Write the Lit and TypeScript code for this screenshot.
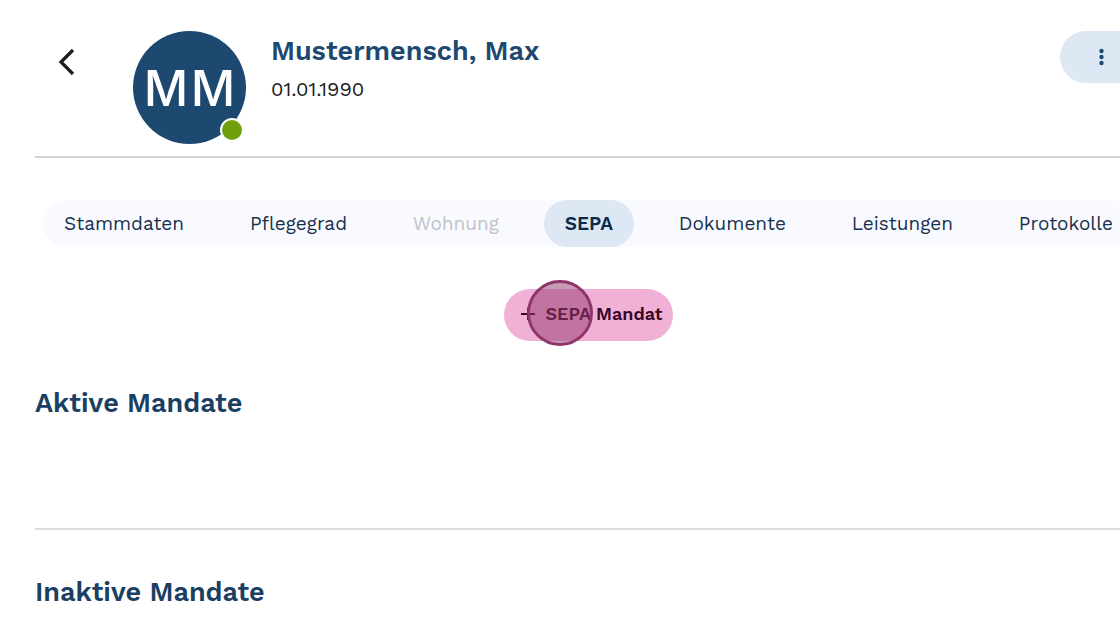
import { LitElement, html, css, svg } from "lit";
import { customElement, state } from "lit/decorators.js";
import { classMap } from "lit/directives/class-map.js";

interface Tab {
  label: string;
  disabled?: boolean;
}

const TABS: Tab[] = [
  { label: "Stammdaten" },
  { label: "Pflegegrad" },
  { label: "Wohnung", disabled: true },
  { label: "SEPA" },
  { label: "Dokumente" },
  { label: "Leistungen" },
  { label: "Protokolle" },
];

const chevronLeft = svg`<path d="M17 2 5 14 17 26" fill="none" stroke="currentColor" stroke-width="3.200"/>`;

@customElement("app-root")
export class AppRoot extends LitElement {
  @state() private active = "SEPA";

  static styles = css`
    :host {
      display: block;
      min-height: 100vh;
      overflow: hidden;
      box-sizing: border-box;
      background: #fff;
      color: #1c1c1c;
      font-family: "Work Sans", Inter, "Noto Sans", sans-serif;
    }
    button {
      font: inherit;
      color: inherit;
      border: 0;
      padding: 0;
      background: none;
      cursor: pointer;
    }
    /* The sheet runs on past the right edge of the viewport. */
    .sheet {
      margin: 0 -22px 0 35px;
    }
    .header {
      display: flex;
      align-items: flex-start;
      padding: 31px 0 12px 16px;
      border-bottom: 2px solid #d2d2d2;
    }
    .back {
      display: flex;
      justify-content: center;
      width: 30px;
      margin: 17px 52px 0 0;
    }
    .avatar {
      position: relative;
      display: flex;
      align-items: center;
      justify-content: center;
      width: 113px;
      height: 113px;
      border-radius: 50%;
      background: #1d4971;
      color: #fff;
      font-size: 54px;
      font-weight: 500;
      line-height: 1;
    }
    .status {
      position: absolute;
      right: 2px;
      bottom: 2px;
      width: 20px;
      height: 20px;
      border: 2px solid #fff;
      border-radius: 50%;
      background: #6f9f0b;
    }
    .person {
      flex: 1;
      padding: 4px 0 0 25px;
    }
    .name,
    .section-title {
      margin: 0;
      font-size: 27px;
      line-height: 32px;
      font-weight: 600;
      color: #1d4971;
    }
    .section-title {
      color: #1a3f63;
    }
    .birth {
      margin: 9px 0 0;
      font-size: 20px;
      line-height: 26px;
    }
    .menu {
      display: flex;
      align-items: center;
      justify-content: center;
      width: 82px;
      height: 52px;
      border-radius: 26px;
      background: #dde8f4;
      color: #1d4971;
    }
    .tabs {
      display: flex;
      justify-content: space-between;
      margin: 42px 8px;
      border-radius: 24px;
      background: #f8faff;
    }
    .tab {
      height: 47px;
      padding: 0 21px;
      border-radius: 24px;
      font-size: 19px;
      color: #17304d;
    }
    .tab.selected {
      background: #dde8f4;
      color: #0b2a4c;
      font-weight: 600;
    }
    .tab:disabled {
      color: #bfc2c7;
      cursor: default;
    }
    .actions {
      display: flex;
      justify-content: center;
    }
    .add {
      position: relative;
      display: flex;
      align-items: center;
      gap: 10px;
      height: 52px;
      padding: 0 10px 2px 17px;
      border-radius: 26px;
      background: #f1b1d6;
      color: #3a0629;
      font-size: 18px;
      line-height: 22px;
      font-weight: 600;
    }
    .pointer {
      position: absolute;
      left: 23px;
      top: -9px;
      box-sizing: border-box;
      width: 66px;
      height: 66px;
      border: 3px solid #8f3569;
      border-radius: 50%;
      background: rgba(145, 55, 106, 0.5);
    }
    .section {
      padding-top: 46px;
    }
    .section:not(:last-child) {
      padding-bottom: 109px;
      border-bottom: 2px solid #dcdcdc;
    }
  `;

  render() {
    return html`
      <main class="sheet">
        <header class="header">
          <button class="back" aria-label="Zurück">
            <svg width="20" height="28" viewBox="0 0 20 28">${chevronLeft}</svg>
          </button>
          <div class="avatar">MM<span class="status"></span></div>
          <div class="person">
            <h1 class="name">Mustermensch, Max</h1>
            <p class="birth">01.01.1990</p>
          </div>
          <button class="menu" aria-label="Weitere Aktionen">
            <svg width="6" height="18" viewBox="0 0 6 18" fill="currentColor">
              <circle cx="3.500" cy="3" r="2.200" />
              <circle cx="3.500" cy="9" r="2.200" />
              <circle cx="3.500" cy="15" r="2.200" />
            </svg>
          </button>
        </header>

        <nav class="tabs">
          ${TABS.map(
            (tab) => html`<button
              class=${classMap({ tab: true, selected: tab.label === this.active })}
              ?disabled=${tab.disabled}
              @click=${() => (this.active = tab.label)}
            >${tab.label}</button>`
          )}
        </nav>

        <div class="actions">
          <button class="add">
            <svg width="14" height="14" viewBox="0 0 14 14" stroke="currentColor" stroke-width="2">
              <path d="M0 7H14M7 1V13" />
            </svg>
            <span>SEPA Mandat</span>
            <span class="pointer"></span>
          </button>
        </div>

        <section class="section">
          <h2 class="section-title">Aktive Mandate</h2>
        </section>
        <section class="section">
          <h2 class="section-title">Inaktive Mandate</h2>
        </section>
      </main>
    `;
  }
}
